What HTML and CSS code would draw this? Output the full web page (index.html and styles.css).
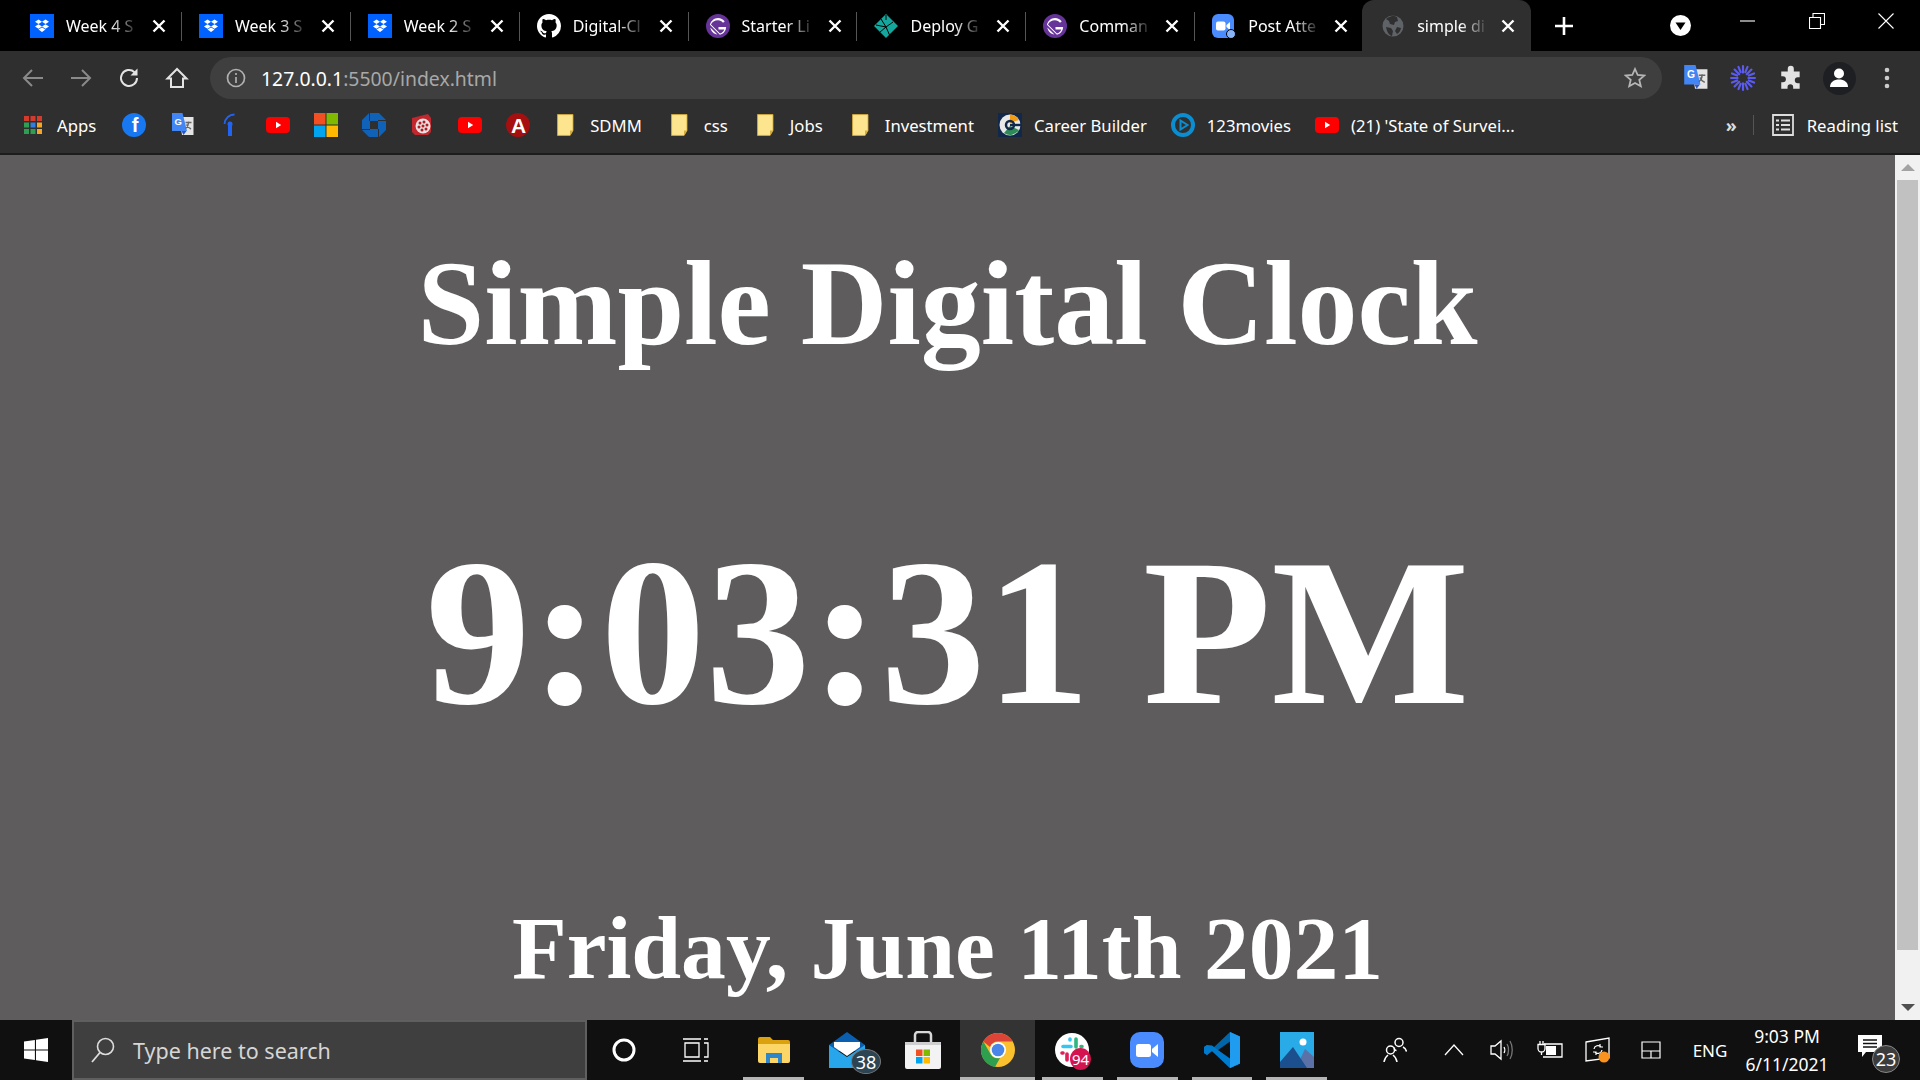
FILE: index.html
```html
<!DOCTYPE html>
<html>

<head>
    <meta charset="UTF-8" />
    <meta name="viewport" content="width=device-width, initial-scale=1">
    <title>simple digital clock</title>
    <link rel="stylesheet" href="styles.css">
</head>

<body>
    <svg class="sprites" width="0" height="0">
        <defs>
            <symbol id="i-dropbox" viewBox="0 0 24 24">
                <rect width="24" height="24" fill="#0061fe" />
                <path fill="#fff" d="M8.5 5.5 12 7.8 8.5 10 5 7.8zM15.500 5.500 19 7.800 15.500 10 12 7.800zM8.500 10.200 12 12.500 8.500 14.700 5 12.500zM15.500 10.200 19 12.500 15.500 14.700 12 12.500zM8.500 15.600 12 13.400 15.500 15.600 12 18z" />
            </symbol>
            <symbol id="i-github" viewBox="0 0 16 16">
                <path fill="#fff" d="M8 0C3.58 0 0 3.58 0 8c0 3.54 2.29 6.53 5.47 7.59.4.07.55-.17.55-.38 0-.19-.01-.82-.01-1.49-2.01.37-2.53-.49-2.69-.94-.09-.23-.48-.94-.82-1.13-.28-.15-.68-.52-.01-.53.63-.01 1.08.58 1.23.82.72 1.21 1.87.87 2.33.66.07-.52.28-.87.51-1.07-1.78-.2-3.64-.89-3.64-3.95 0-.87.31-1.59.82-2.15-.08-.2-.36-1.02.08-2.12 0 0 .67-.21 2.2.82.64-.18 1.32-.27 2-.27.68 0 1.36.09 2 .27 1.53-1.04 2.2-.82 2.2-.82.44 1.1.16 1.92.08 2.12.51.56.82 1.27.82 2.15 0 3.07-1.87 3.75-3.65 3.95.29.25.54.73.54 1.48 0 1.07-.01 1.93-.01 2.2 0 .21.15.46.55.38A8.013 8.013 0 0016 8c0-4.42-3.58-8-8-8z" />
            </symbol>
            <symbol id="i-gatsby" viewBox="0 0 24 24">
                <circle cx="12" cy="12" r="12" fill="#663399" />
                <path fill="#fff" d="M4.300 13.500c.3 1.900 1.100 3.500 2.400 4.800 1.300 1.300 3 2.100 4.700 2.300z" />
                <path fill="#fff" d="M5 10.500 14 19.400c2-.6 3.500-2 4.300-4H12.500V13h7.600c0 3.700-2.700 6.900-6.200 7.800L3.900 10.800C4.900 6.900 8.200 4 12 4c2.800 0 5.200 1.300 6.700 3.400l-1.700 1.300C15.900 7.200 14.100 6.200 12 6.200c-3.300 0-6.100 1.700-7 4.300z" />
            </symbol>
            <symbol id="i-youtube" viewBox="0 0 24 24">
                <rect y="4" width="24" height="16" rx="4" fill="#f00" />
                <path fill="#fff" d="M10 8.800v6.400l5.200-3.200z" />
            </symbol>
            <symbol id="i-folder" viewBox="0 0 24 24">
                <path fill="#f2d77a" stroke="#d7ab3c" stroke-width=".8" d="M3.500 1.500h15.500v16l-3 5h-12.500z" />
                <path fill="#fde58f" d="M4.300 2.300h13.900v14.700l-2.500 4.700H4.300z" />
                <path fill="#d7ab3c" d="M16 17.500h3l-3 5z" />
            </symbol>
            <symbol id="i-translate" viewBox="0 0 24 24">
                <path fill="#e4e4e4" d="M9 4h14.500v18H12z" />
                <path fill="#4285f4" d="M2 0h10.500l4.500 18H2z" />
                <path fill="#2a56c6" d="M11.500 18h5l-3 4z" />
                <path fill="none" stroke="#666" stroke-width="1.400" d="M15.500 9.500h6M18.500 8.500v1.500c0 2.500-1.500 4.300-3 5.500M16.500 11.500c.8 2 2.500 3.500 4.500 4.500" />
                <text x="4.500" y="12" class="icon-letter" font-size="9.500">G</text>
            </symbol>
        </defs>
    </svg>

    <div class="browser">
        <div class="tabstrip">
            <div class="tab">
                <svg class="tab-icon"><use href="#i-dropbox" /></svg>
                <span class="tab-title">Week 4 S</span>
                <svg class="tab-close" viewBox="0 0 14 14"><path d="M1.500 1.500l11 11M12.500 1.500l-11 11" /></svg>
            </div>
            <div class="tab">
                <svg class="tab-icon"><use href="#i-dropbox" /></svg>
                <span class="tab-title">Week 3 S</span>
                <svg class="tab-close" viewBox="0 0 14 14"><path d="M1.500 1.500l11 11M12.500 1.500l-11 11" /></svg>
            </div>
            <div class="tab">
                <svg class="tab-icon"><use href="#i-dropbox" /></svg>
                <span class="tab-title">Week 2 S</span>
                <svg class="tab-close" viewBox="0 0 14 14"><path d="M1.500 1.500l11 11M12.500 1.500l-11 11" /></svg>
            </div>
            <div class="tab">
                <svg class="tab-icon"><use href="#i-github" /></svg>
                <span class="tab-title">Digital-Cl</span>
                <svg class="tab-close" viewBox="0 0 14 14"><path d="M1.500 1.500l11 11M12.500 1.500l-11 11" /></svg>
            </div>
            <div class="tab">
                <svg class="tab-icon"><use href="#i-gatsby" /></svg>
                <span class="tab-title">Starter Li</span>
                <svg class="tab-close" viewBox="0 0 14 14"><path d="M1.500 1.500l11 11M12.500 1.500l-11 11" /></svg>
            </div>
            <div class="tab">
                <svg class="tab-icon" viewBox="0 0 24 24">
                    <path fill="#14a79d" d="M12 0 24 12 12 24 0 12z" />
                    <path fill="none" stroke="#000" stroke-width="1" d="M7 5l5 8 7-5M12 13l-6 5M12 13l4 9M12 13 2 11M12 1v5" />
                </svg>
                <span class="tab-title">Deploy G</span>
                <svg class="tab-close" viewBox="0 0 14 14"><path d="M1.500 1.500l11 11M12.500 1.500l-11 11" /></svg>
            </div>
            <div class="tab">
                <svg class="tab-icon"><use href="#i-gatsby" /></svg>
                <span class="tab-title">Comman</span>
                <svg class="tab-close" viewBox="0 0 14 14"><path d="M1.500 1.500l11 11M12.500 1.500l-11 11" /></svg>
            </div>
            <div class="tab">
                <svg class="tab-icon" viewBox="0 0 24 24">
                    <rect width="22" height="24" rx="6" fill="#4a8cff" />
                    <rect x="4" y="7.500" width="9.500" height="9" rx="2" fill="#fff" />
                    <path fill="#fff" d="M14.500 11 18 8v8l-3.500-3z" />
                    <circle cx="19" cy="20" r="4.500" fill="#8ab4f8" stroke="#000" stroke-width="1" />
                </svg>
                <span class="tab-title">Post Atte</span>
                <svg class="tab-close" viewBox="0 0 14 14"><path d="M1.500 1.500l11 11M12.500 1.500l-11 11" /></svg>
            </div>
            <div class="tab tab-active">
                <svg class="tab-icon tab-globe" viewBox="0 0 24 24">
                    <circle cx="12" cy="12" r="10.500" fill="#5f6368" />
                    <path fill="#2f2f2f" d="M12 1.500c-2 1-5 1.500-7 3.500l3 2 1 3 4 1 1-3 3-1-1-4zM5 13l5 1 2 3-1 5c-3-.5-5-4-6-9zM16 13l4 1c-.5 3-2 5-4 6l-2-3z" />
                </svg>
                <span class="tab-title">simple di</span>
                <svg class="tab-close" viewBox="0 0 14 14"><path d="M1.500 1.500l11 11M12.500 1.500l-11 11" /></svg>
            </div>
            <svg class="new-tab" viewBox="0 0 18 18"><path d="M9 0v18M0 9h18" /></svg>
            <svg class="tab-search" viewBox="0 0 21 21">
                <circle cx="10.500" cy="10.500" r="10.500" fill="#fff" />
                <path fill="#000" d="M5.500 7.500h10l-5 7.500z" />
            </svg>
            <div class="window-btn">
                <svg width="16" height="16" viewBox="0 0 16 16"><path d="M0 8h15" /></svg>
            </div>
            <div class="window-btn">
                <svg width="16" height="16" viewBox="0 0 16 16"><path d="M.5 4.500h11v11H.5zM4 4.500V.5h11.500v11h-4" /></svg>
            </div>
            <div class="window-btn">
                <svg width="16" height="16" viewBox="0 0 16 16"><path d="M.5.500l15 15M15.500.500l-15 15" /></svg>
            </div>
        </div>

        <div class="toolbar">
            <div class="tool-btn">
                <svg class="tool-icon" viewBox="0 0 24 24"><path class="dim" d="M22 12H3M11 4l-8 8 8 8" /></svg>
            </div>
            <div class="tool-btn">
                <svg class="tool-icon" viewBox="0 0 24 24"><path class="dim" d="M2 12h19M13 4l8 8-8 8" /></svg>
            </div>
            <div class="tool-btn">
                <svg class="tool-icon" viewBox="0 0 24 24">
                    <path d="M20 12a8 8 0 1 1-2.500-5.800" />
                    <path class="solid" d="M20.500 2.500v7h-7z" />
                </svg>
            </div>
            <div class="tool-btn">
                <svg class="tool-icon" viewBox="0 0 24 24"><path d="M12 3 2.500 12.500H6V21h12v-8.500h3.500z" /></svg>
            </div>
            <div class="omnibox">
                <svg class="omni-info" viewBox="0 0 20 20">
                    <circle cx="10" cy="10" r="8.500" />
                    <path d="M10 9v6M10 5v2" />
                </svg>
                <span class="url"><span class="url-host">127.0.0.1</span>:5500/index.html</span>
                <svg class="omni-star" viewBox="0 0 22 22"><path d="M11 2l2.700 6 6.500.6-4.900 4.300 1.500 6.400L11 16l-5.800 3.300 1.500-6.400L1.800 8.600 8.300 8z" /></svg>
            </div>
            <div class="tool-btn">
                <svg class="ext-icon"><use href="#i-translate" /></svg>
            </div>
            <div class="tool-btn">
                <svg class="ext-icon" viewBox="0 0 24 24">
                    <g stroke="#5b5bf0" stroke-width="2" stroke-linecap="round">
                        <path d="M12 1v6M12 17v6M1 12h6M17 12h6M4.200 4.200l4.300 4.300M15.500 15.500l4.300 4.300M19.800 4.200l-4.300 4.300M8.500 15.500l-4.300 4.300M7.800 1.800l2 4.800M14.200 17.400l2 4.800M16.200 1.800l-2 4.800M9.800 17.400l-2 4.800M1.800 7.800l4.800 2M17.400 14.200l4.800 2M1.800 16.200l4.800-2M17.400 9.800l4.800-2" />
                    </g>
                </svg>
            </div>
            <div class="tool-btn">
                <svg class="ext-icon" viewBox="0 0 24 24">
                    <path fill="#e3e3e3" d="M9 3.500a2.800 2.800 0 0 1 5.600 0V6h5.400v5.200h-1.700a2.800 2.800 0 0 0 0 5.600H20V22h-6v-1.700a2.600 2.600 0 0 0-5.200 0V22H3v-6h1.500a2.800 2.800 0 0 0 0-5.600H3V6h6z" />
                </svg>
            </div>
            <div class="tool-btn">
                <div class="avatar">
                    <svg width="22" height="22" viewBox="0 0 22 22">
                        <circle cx="11" cy="6.500" r="5" fill="#fff" />
                        <path fill="#fff" d="M2 20c0-5 4-7.500 9-7.500s9 2.500 9 7.500z" />
                    </svg>
                </div>
            </div>
            <div class="tool-btn">
                <svg width="6" height="22" viewBox="0 0 6 22">
                    <circle cx="3" cy="3" r="2.300" fill="#ccc" />
                    <circle cx="3" cy="11" r="2.300" fill="#ccc" />
                    <circle cx="3" cy="19" r="2.300" fill="#ccc" />
                </svg>
            </div>
        </div>

        <div class="bookmarks">
            <div class="bm">
                <svg class="bm-icon" viewBox="0 0 24 24">
                    <g>
                        <rect x="3" y="3" width="5" height="5" fill="#d33b2c" />
                        <rect x="9.500" y="3" width="5" height="5" fill="#d33b2c" />
                        <rect x="16" y="3" width="5" height="5" fill="#d33b2c" />
                        <rect x="3" y="9.500" width="5" height="5" fill="#2f9e52" />
                        <rect x="9.500" y="9.500" width="5" height="5" fill="#2f7de1" />
                        <rect x="16" y="9.500" width="5" height="5" fill="#f5a623" />
                        <rect x="3" y="16" width="5" height="5" fill="#2f9e52" />
                        <rect x="9.500" y="16" width="5" height="5" fill="#2f9e52" />
                        <rect x="16" y="16" width="5" height="5" fill="#f5a623" />
                    </g>
                </svg>
                Apps
            </div>
            <div class="fb-badge">f</div>
            <svg class="bm-icon"><use href="#i-translate" /></svg>
            <svg class="bm-icon" viewBox="0 0 24 24">
                <circle cx="12" cy="11" r="2.500" fill="#2164f3" />
                <rect x="10" y="13" width="4" height="10" fill="#2164f3" />
                <path fill="none" stroke="#2164f3" stroke-width="1.800" d="M6.500 11C7 5 11.500 1.500 16.500 1.500" />
            </svg>
            <svg class="bm-icon"><use href="#i-youtube" /></svg>
            <svg class="bm-icon" viewBox="0 0 24 24">
                <rect width="11.500" height="11.500" fill="#f25022" />
                <rect x="12.500" width="11.500" height="11.500" fill="#7fba00" />
                <rect y="12.500" width="11.500" height="11.500" fill="#00a4ef" />
                <rect x="12.500" y="12.500" width="11.500" height="11.500" fill="#ffb900" />
            </svg>
            <svg class="bm-icon" viewBox="0 0 24 24">
                <path fill="#0f62b8" d="M8 0h9l7 7h-8V8H8zM16 8h0zM24 8v9l-7 7v-8h-1V8zM16 24H7l-7-7h8v-1h8zM0 16V7l7-7v8h1v8z" />
            </svg>
            <svg class="bm-icon" viewBox="0 0 24 24">
                <path fill="#c2272d" d="M2 5l16-4 3 4v14l-3 3H5l-3-3z" />
                <circle cx="13" cy="13" r="7.500" fill="#e8e0e0" />
                <g fill="#b01f25">
                    <circle cx="10" cy="10" r="1.500" /><circle cx="14" cy="9" r="1.500" /><circle cx="17" cy="12" r="1.500" />
                    <circle cx="9" cy="14" r="1.500" /><circle cx="13" cy="13" r="1.500" /><circle cx="16" cy="16" r="1.500" /><circle cx="12" cy="17" r="1.500" />
                </g>
            </svg>
            <svg class="bm-icon"><use href="#i-youtube" /></svg>
            <svg class="bm-icon" viewBox="0 0 24 24">
                <circle cx="12" cy="12" r="12" fill="#a50f0f" />
                <text x="5" y="20" class="icon-letter" font-size="21">A</text>
            </svg>
            <div class="bm"><svg class="bm-icon"><use href="#i-folder" /></svg>SDMM</div>
            <div class="bm"><svg class="bm-icon"><use href="#i-folder" /></svg>css</div>
            <div class="bm"><svg class="bm-icon"><use href="#i-folder" /></svg>Jobs</div>
            <div class="bm bm-tight"><svg class="bm-icon"><use href="#i-folder" /></svg>Investment</div>
            <div class="bm bm-tight">
                <svg class="bm-icon" viewBox="0 0 24 24">
                    <rect width="24" height="24" fill="#12284b" />
                    <circle cx="12" cy="12" r="10.500" fill="#e8e8e8" />
                    <path fill="#f39c12" d="M12 1.500A10.500 10.500 0 0 1 21 7l-9 3z" />
                    <path fill="#2e8b57" d="M21 17a10.500 10.500 0 0 1-15 3l6-7z" />
                    <circle cx="12" cy="12" r="4" fill="none" stroke="#12284b" stroke-width="2.500" />
                    <rect x="12" y="10.800" width="11" height="2.400" fill="#12284b" />
                </svg>
                Career Builder
            </div>
            <div class="bm bm-tight">
                <svg class="bm-icon" viewBox="0 0 24 24">
                    <circle cx="12" cy="12" r="10" fill="none" stroke="#0a8ed1" stroke-width="4" />
                    <path fill="none" stroke="#0a8ed1" stroke-width="2" d="M9.500 7.500l7 4.500-7 4.500z" />
                </svg>
                123movies
            </div>
            <div class="bm"><svg class="bm-icon"><use href="#i-youtube" /></svg>(21) 'State of Survei...</div>
            <span class="bm-more">»</span>
            <div class="bm bm-reading">
                <svg class="bm-icon" viewBox="0 0 24 24">
                    <path fill="none" stroke="#ddd" stroke-width="1.800" d="M2 2h20v20H2zM10 7.500h9M10 12h9M10 16.500h9" />
                    <path fill="none" stroke="#ddd" stroke-width="2.200" d="M5 7.500h3M5 12h3M5 16.500h3" />
                </svg>
                Reading list
            </div>
        </div>

        <div class="viewport">
            <main class="clock-page">
                <h1 class="clock-title">Simple Digital Clock</h1>
                <div class="clock-time">9:03:31 PM</div>
                <div class="clock-date">Friday, June 11th 2021</div>
            </main>
            <div class="scrollbar">
                <div class="scroll-arrow"><span class="arrow-up"></span></div>
                <div class="scroll-track"><div class="scroll-thumb"></div></div>
                <div class="scroll-arrow"><span class="arrow-down"></span></div>
            </div>
        </div>
    </div>

    <div class="taskbar">
        <div class="start">
            <svg width="24" height="24" viewBox="0 0 24 24">
                <path fill="#fff" d="M0 3.400 10.900 1.900V11.500H0zM12 1.700 24 0V11.500H12zM0 12.500H10.900V22.100L0 20.600zM12 12.500H24V24L12 22.300z" />
            </svg>
        </div>
        <div class="search">
            <svg width="24" height="26" viewBox="0 0 24 26">
                <circle cx="14.500" cy="9.500" r="8" fill="none" stroke="#ddd" stroke-width="1.600" />
                <path d="M9 15.500 1 25" stroke="#ddd" stroke-width="1.800" />
            </svg>
            <span>Type here to search</span>
        </div>
        <div class="task-slot">
            <svg width="24" height="24" viewBox="0 0 24 24"><circle cx="12" cy="12" r="10" fill="none" stroke="#fff" stroke-width="3" /></svg>
        </div>
        <div class="task-slot task-view">
            <svg width="28" height="24" viewBox="0 0 28 24">
                <path fill="none" stroke="#fff" stroke-width="1.300" d="M1 1h18M1 23h18M3 5h14v14H3zM22 5h4v14h-4M22 1h4M22 23h4" />
            </svg>
        </div>
        <div class="task-slot is-open">
            <svg width="34" height="28" viewBox="0 0 34 28">
                <path fill="#dca10f" d="M1 3a2 2 0 0 1 2-2h10l3 3h15a2 2 0 0 1 2 2v4H1z" />
                <path fill="#fcd666" d="M1 8h32v17a2 2 0 0 1-2 2H3a2 2 0 0 1-2-2z" />
                <path fill="#2f86c9" d="M9 17h16v10h-4v-5h-8v5H9z" />
            </svg>
        </div>
        <div class="task-slot">
            <svg width="38" height="36" viewBox="0 0 38 36">
                <path fill="#0a5fb0" d="M0 13 18 0l18 13v6H0z" />
                <path fill="#fff" d="M5 10h26v5L18 24 5 15z" />
                <path fill="#27a6ec" d="M0 13l18 12 18-12v23H0z" />
            </svg>
            <span class="count-badge">38</span>
        </div>
        <div class="task-slot">
            <svg width="36" height="38" viewBox="0 0 36 38">
                <path fill="none" stroke="#d8d8d8" stroke-width="2.500" d="M10 11V4a3 3 0 0 1 3-3h10a3 3 0 0 1 3 3v7" />
                <path fill="#f3f3f3" d="M0 11h36v25a2 2 0 0 1-2 2H2a2 2 0 0 1-2-2z" />
                <rect y="11" width="36" height="3" fill="#cfcfcf" />
                <rect x="11" y="18.500" width="6.500" height="6.500" fill="#f25022" />
                <rect x="18.500" y="18.500" width="6.500" height="6.500" fill="#7fba00" />
                <rect x="11" y="26" width="6.500" height="6.500" fill="#00a4ef" />
                <rect x="18.500" y="26" width="6.500" height="6.500" fill="#ffb900" />
            </svg>
        </div>
        <div class="task-slot is-active">
            <svg width="34" height="34" viewBox="0 0 34 34">
                <circle cx="17" cy="17" r="17" fill="#fbc02d" />
                <path fill="#db4437" d="M17 0a17 17 0 0 1 14.700 8.500H17a8.500 8.500 0 0 0-8 5.500L2.300 8.500A17 17 0 0 1 17 0z" />
                <path fill="#2e9e4f" d="M2.300 8.500 9.500 21a8.500 8.500 0 0 0 9.500 4L14 34A17 17 0 0 1 2.300 8.500z" />
                <circle cx="17" cy="17" r="8" fill="#fff" />
                <circle cx="17" cy="17" r="6.300" fill="#4a86e8" />
            </svg>
        </div>
        <div class="task-slot is-open">
            <svg width="34" height="34" viewBox="0 0 34 34">
                <circle cx="17" cy="17" r="17" fill="#fff" />
                <g stroke-width="3.600" stroke-linecap="round">
                    <path stroke="#36c5f0" d="M8 13.500h8M15 6v1" />
                    <path stroke="#2eb67d" d="M21 6v8M27 13.500h-1" />
                    <path stroke="#e01e5a" d="M12 21v6M7 20h1" />
                </g>
            </svg>
            <span class="slack-badge">94</span>
        </div>
        <div class="task-slot is-open">
            <svg width="34" height="36" viewBox="0 0 34 36">
                <rect width="34" height="36" rx="10" fill="#4a8cff" />
                <rect x="6" y="12" width="15" height="13" rx="2.500" fill="#fff" />
                <path fill="#fff" d="M22 17l6-5v13l-6-5z" />
            </svg>
        </div>
        <div class="task-slot is-open">
            <svg width="36" height="36" viewBox="0 0 36 36">
                <path fill="#0065a9" d="M26 0 36 4.500v27L26 36 8 19l-5 4-3-2v-6l3-2 5 4z" />
                <path fill="#007acc" d="M26 36 36 31.500V18H26zM26 9.500 14 18l-6-4.500L3 13 0 15v6l3 2 5-4L26 36z" />
                <path fill="#1f9cf0" d="M26 0 36 4.500v27L26 36z" />
                <path fill="#101010" d="M26 9.500V26.500L14 18z" />
            </svg>
        </div>
        <div class="task-slot is-open">
            <svg width="34" height="36" viewBox="0 0 34 36">
                <rect width="34" height="36" fill="#29abe8" />
                <circle cx="23" cy="10" r="3.500" fill="#fff" />
                <path fill="#5a72a8" d="M16 36 25 17l9 8v11z" />
                <path fill="#1b4f8e" d="M0 30 13 15l14 21H0z" />
            </svg>
        </div>

        <div class="tray">
            <div class="tray-item tray-people">
                <svg width="24" height="26" viewBox="0 0 24 26">
                    <g fill="none" stroke="#fff" stroke-width="1.500">
                        <circle cx="16" cy="5.500" r="4" />
                        <path d="M11.500 10.500c-.5 2 .5 3 2 3M20 10c2 1 3 2.500 3.500 4.500" />
                        <circle cx="7.500" cy="13" r="4" />
                        <path d="M1 25c.5-3 2-5.500 4-7M14 25c-.5-3-2-5.500-4-7" />
                    </g>
                </svg>
            </div>
            <div class="tray-item tray-caret">
                <svg width="20" height="12" viewBox="0 0 20 12"><path fill="none" stroke="#fff" stroke-width="1.300" d="M1 11 10 1l9 10" /></svg>
            </div>
            <div class="tray-item">
                <svg width="24" height="22" viewBox="0 0 24 22">
                    <path fill="none" stroke="#fff" stroke-width="1.300" d="M1 7h4l6-5v18l-6-5H1z" />
                    <path fill="none" stroke="#fff" stroke-width="1.300" d="M14 8c1 1.500 1 4.500 0 6" />
                    <path fill="none" stroke="#777" stroke-width="1.300" d="M17 5c2 3 2 9 0 12M20 2c3 5 3 13 0 18" />
                </svg>
            </div>
            <div class="tray-item">
                <svg width="26" height="18" viewBox="0 0 26 18">
                    <path fill="none" stroke="#fff" stroke-width="1.300" d="M7 3h18v13H6" />
                    <rect x="9" y="5" width="10" height="9" fill="#fff" />
                    <path fill="none" stroke="#fff" stroke-width="1.300" d="M1 3.500h7v4a3.500 3.500 0 0 1-7 0zM3 3.500V0M6 3.500V0M4.500 11v3" />
                </svg>
            </div>
            <div class="tray-item">
                <svg width="26" height="26" viewBox="0 0 26 26">
                    <path fill="none" stroke="#fff" stroke-width="1.300" d="M1 5 24 1v20L1 24z" />
                    <path fill="none" stroke="#fff" stroke-width="1.200" d="M9 12a4 4 0 0 1 7-2M17 13a4 4 0 0 1-7 2M15 7v3h3M11 18v-3H8" />
                    <circle cx="19" cy="20" r="5.500" fill="#f7931e" />
                </svg>
            </div>
            <div class="tray-item tray-keyboard">
                <svg width="20" height="18" viewBox="0 0 20 18"><path fill="none" stroke="#fff" stroke-width="1.200" d="M1 1h18v16H1zM1 10h18M10 10v7" /></svg>
            </div>
            <div class="tray-text tray-lang">ENG</div>
            <div class="tray-clock">
                <span>9:03 PM</span>
                <span>6/11/2021</span>
            </div>
            <div class="tray-notify">
                <svg width="24" height="22" viewBox="0 0 24 22">
                    <path fill="#fff" d="M0 0h24v17H8l-4 5v-5H0z" />
                    <path stroke="#101010" stroke-width="1.300" d="M5 5h14M5 8.500h14M5 12h14" />
                </svg>
                <span class="notify-badge">23</span>
            </div>
        </div>
    </div>
</body>

</html>
```

FILE: styles.css
```css
* {
    box-sizing: border-box;
}

html,
body {
    height: 100%;
}

body {
    margin: 0;
    display: flex;
    flex-direction: column;
    overflow: hidden;
    font-family: "Noto Sans", sans-serif;
    color: #fff;
    background-color: #101010;
}

.sprites {
    position: absolute;
}

.icon-letter {
    font-family: "Liberation Sans", sans-serif;
    font-weight: bold;
    fill: #fff;
}

.browser {
    flex: 1;
    display: flex;
    flex-direction: column;
    min-height: 0;
}

/* tabs */
.tabstrip {
    height: 51px;
    display: flex;
    align-items: center;
    padding-left: 13px;
    background-color: #000;
}

.tab {
    position: relative;
    flex: none;
    width: 168.9px;
    height: 51px;
    display: flex;
    align-items: center;
    padding-left: 17px;
    font-size: 16px;
}

.tab::after {
    content: "";
    position: absolute;
    right: 0;
    top: 12px;
    height: 29px;
    width: 1px;
    background-color: #555;
}

.tab-active {
    margin-left: -2px;
    padding-left: 19px;
    background-color: #2f2f2f;
    border-radius: 12px 12px 0 0;
}

.tab-active::after {
    display: none;
}

.tab-active .tab-title {
    width: 78px;
}

.tab-icon {
    flex: none;
    width: 24px;
    height: 24px;
}

.tab-title {
    width: 80px;
    margin-left: 12px;
    white-space: nowrap;
    overflow: hidden;
    -webkit-mask-image: linear-gradient(to right, #000 55%, transparent 92%);
    mask-image: linear-gradient(to right, #000 55%, transparent 92%);
}

.tab-close {
    flex: none;
    width: 14px;
    height: 14px;
    margin-left: 6px;
    stroke: #fff;
    stroke-width: 2.4;
    fill: none;
}

.new-tab {
    flex: none;
    width: 18px;
    height: 18px;
    margin-left: 24px;
    stroke: #fff;
    stroke-width: 2.600;
}

.tab-search {
    flex: none;
    width: 21px;
    height: 21px;
    margin-left: auto;
    margin-right: 23px;
}

.window-btn {
    flex: none;
    width: 68.67px;
    height: 42px;
    align-self: flex-start;
    display: flex;
    align-items: center;
    justify-content: center;
}

.window-btn svg {
    fill: none;
    stroke: #fff;
    stroke-width: 1.100;
}

/* toolbar */
.toolbar {
    height: 48px;
    display: flex;
    align-items: flex-end;
    padding: 0 9px;
    background-color: #2f2f2f;
}

.tool-btn {
    flex: none;
    width: 48px;
    height: 42px;
    display: flex;
    align-items: center;
    justify-content: center;
}

.tool-icon {
    width: 24px;
    height: 24px;
    fill: none;
    stroke: #e3e3e3;
    stroke-width: 2;
}

.tool-icon .dim {
    stroke: #8a8a8a;
}

.tool-icon .solid {
    fill: #e3e3e3;
    stroke: none;
}

.omnibox {
    flex: 1;
    height: 42px;
    margin: 0 9px;
    display: flex;
    align-items: center;
    padding: 0 16px;
    border-radius: 21px;
    background-color: #3f3f3f;
    font-size: 19.400px;
    color: #a8a8a8;
}

.omni-info {
    flex: none;
    width: 20px;
    height: 20px;
    fill: none;
    stroke: #b0b0b0;
    stroke-width: 1.700;
}

.url {
    margin-left: 15px;
}

.url-host {
    color: #fff;
}

.omni-star {
    flex: none;
    width: 22px;
    height: 22px;
    margin-left: auto;
    fill: none;
    stroke: #b5b5b5;
    stroke-width: 1.800;
}

.ext-icon {
    width: 26px;
    height: 26px;
}

.avatar {
    width: 33px;
    height: 33px;
    display: flex;
    align-items: center;
    justify-content: center;
    border-radius: 50%;
    background-color: #1d1f22;
}

/* bookmarks */
.bookmarks {
    height: 56px;
    display: flex;
    align-items: center;
    gap: 24px;
    padding: 0 22px 2px 21px;
    border-bottom: 2px solid #1c1c1c;
    background-color: #2f2f2f;
    font-size: 16.700px;
    white-space: nowrap;
}

.bm {
    display: flex;
    align-items: center;
    gap: 12px;
    margin-right: 2px;
}

.bm-tight {
    margin-right: 0;
}

.bm-icon {
    flex: none;
    width: 24px;
    height: 24px;
}

.fb-badge {
    flex: none;
    width: 24px;
    height: 24px;
    padding-left: 2px;
    border-radius: 50%;
    background-color: #1778f2;
    font-family: "Liberation Sans", sans-serif;
    font-size: 20px;
    font-weight: bold;
    line-height: 25px;
    text-align: center;
}

.bm-more {
    margin-left: auto;
    margin-right: 10px;
    font-size: 18px;
    font-weight: bold;
    color: #ddd;
}

.bm-reading {
    position: relative;
    margin-right: 0;
}

.bm-reading::before {
    content: "";
    position: absolute;
    left: -18px;
    top: 2px;
    bottom: 2px;
    width: 1px;
    background-color: #555;
}

/* page */
.viewport {
    flex: 1;
    display: flex;
    min-height: 0;
    background-color: #5e5c5d;
}

.clock-page {
    flex: 1;
    display: flex;
    flex-direction: column;
    align-items: center;
    font-family: "Liberation Serif", serif;
    font-weight: bold;
    color: #fff;
}

.clock-title {
    margin: 89px 0 0;
    font-size: 120px;
    line-height: 1;
}

.clock-time {
    margin-top: 163px;
    font-size: 210px;
    line-height: 1;
}

.clock-date {
    margin-top: 166px;
    font-size: 89.600px;
    line-height: 1;
}

.scrollbar {
    flex: none;
    width: 25px;
    display: flex;
    flex-direction: column;
    background-color: #f1f1f1;
}

.scroll-arrow {
    height: 25px;
    display: flex;
    align-items: center;
    justify-content: center;
}

.arrow-up {
    border: 7px solid transparent;
    border-top: 0;
    border-bottom: 7px solid #a3a3a3;
}

.arrow-down {
    border: 7px solid transparent;
    border-bottom: 0;
    border-top: 7px solid #505050;
}

.scroll-track {
    flex: 1;
    padding: 0 2px;
}

.scroll-thumb {
    height: 770px;
    background-color: #c1c1c1;
}

/* taskbar */
.taskbar {
    flex: none;
    height: 60px;
    display: flex;
    background-color: #101010;
}

.start {
    flex: none;
    width: 72px;
    display: flex;
    align-items: center;
    justify-content: center;
}

.search {
    flex: none;
    width: 515px;
    display: flex;
    align-items: center;
    gap: 18px;
    padding-left: 17px;
    border: 2px solid #5f5f5f;
    background-color: #3f3f3f;
    font-size: 21.500px;
    color: #d6d6d6;
}

.task-slot {
    position: relative;
    flex: none;
    width: 74.700px;
    display: flex;
    align-items: center;
    justify-content: center;
}

.task-view {
    padding-right: 7px;
}

.task-slot.is-open::after,
.task-slot.is-active::after {
    content: "";
    position: absolute;
    left: 7px;
    right: 7px;
    bottom: 0;
    height: 3px;
    background-color: #b5b5b5;
}

.task-slot.is-active {
    background-color: #333;
}

.task-slot.is-active::after {
    left: 0;
    right: 0;
}

.count-badge,
.slack-badge,
.notify-badge {
    position: absolute;
    display: flex;
    align-items: center;
    justify-content: center;
    border-radius: 50%;
}

.count-badge {
    left: 40px;
    top: 29px;
    width: 30px;
    height: 25px;
    border: 1px solid #777;
    background-color: #2d4452;
    font-size: 18px;
}

.slack-badge {
    left: 35px;
    top: 28px;
    width: 21px;
    height: 22px;
    background-color: #d4144f;
    font-size: 15px;
}

.tray {
    flex: 1;
    display: flex;
    align-items: center;
    justify-content: flex-end;
    padding-right: 14px;
}

.tray-item {
    flex: none;
    width: 48px;
    display: flex;
    justify-content: center;
}

.tray-caret {
    margin-left: 11px;
}

.tray-keyboard {
    width: 58px;
}

.tray-lang {
    width: 60px;
    text-align: center;
    font-size: 17px;
}

.tray-clock {
    flex: none;
    width: 94px;
    display: flex;
    flex-direction: column;
    gap: 5px;
    align-items: center;
    font-size: 17.500px;
    line-height: 23px;
}

.tray-notify {
    position: relative;
    flex: none;
    width: 72px;
    display: flex;
    justify-content: center;
    margin-bottom: 8px;
}

.notify-badge {
    left: 38px;
    top: 10px;
    width: 28px;
    height: 28px;
    border: 1px solid #888;
    background-color: #3c3c3c;
    font-size: 18px;
}
```
